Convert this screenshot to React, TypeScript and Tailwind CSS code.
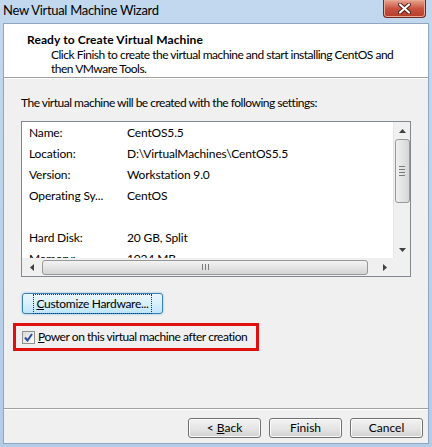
import React from 'react';

const rows: { label: string; value: string }[] = [
  { label: 'Name:', value: 'CentOS5.5' },
  { label: 'Location:', value: 'D:\\VirtualMachines\\CentOS5.5' },
  { label: 'Version:', value: 'Workstation 9.0' },
  { label: 'Operating Sy...', value: 'CentOS' },
  { label: '', value: '' },
  { label: 'Hard Disk:', value: '20 GB, Split' },
  { label: 'Memory:', value: '1024 MB' },
];

function WinButton({ children }: { children: React.ReactNode }) {
  return (
    <div className="w-[73px] h-[20px] rounded-[3px] border border-[#707070] bg-gradient-to-b from-[#f2f2f2] via-[#e6e6e6] to-[#d2d2d2] flex items-center justify-center text-[12px] text-black shadow-[inset_0_0_0_1px_#fcfcfc]">
      {children}
    </div>
  );
}

export default function App() {
  return (
    <div
      className="w-[432px] h-[447px] flex flex-col bg-gradient-to-b from-[#c2d8ef] to-[#b3cce8] overflow-hidden"
      style={{ fontFamily: 'Lato, "Liberation Sans", Arial, sans-serif' }}
    >
      {/* Title bar */}
      <div className="h-[23px] flex items-start justify-between pl-[3px] pr-[6px] shrink-0">
        <span className="text-[13px] leading-[20px] text-black tracking-[-0.3px]">New Virtual Machine Wizard</span>
        <div className="w-[43px] h-[18px] rounded-b-[4px] border border-t-0 border-[#6e2a20] bg-gradient-to-b from-[#e7a58f] via-[#c9533f] to-[#b53c28] flex items-center justify-center shadow-[inset_0_0_0_1px_#e8a898]">
          <svg width="13" height="11" viewBox="0 0 13 11">
            <path d="M2 1.5 L11 9.5 M11 1.5 L2 9.5" stroke="#4b1a12" strokeWidth="4" strokeLinecap="round" />
            <path d="M2 1.5 L11 9.5 M11 1.5 L2 9.5" stroke="#ffffff" strokeWidth="2.2" strokeLinecap="round" />
          </svg>
        </div>
      </div>

      {/* Client area */}
      <div className="mx-[3px] mb-[3px] flex-1 flex flex-col border border-[#8ea6c2] bg-[#f0f0f0] text-[12px]">
        {/* Header */}
        <div className="h-[54px] bg-white border-b border-[#a0a0a0] pt-[8px] shrink-0">
          <div className="pl-[23px] text-[12px] leading-[16px] font-bold text-black tracking-[0.1px]">Ready to Create Virtual Machine</div>
          <div className="pl-[47px] pr-[4px] text-[12px] leading-[14px] text-black tracking-[-0.5px]">
            Click Finish to create the virtual machine and start installing CentOS and
            <br />
            then VMware Tools.
          </div>
        </div>

        {/* Body */}
        <div className="flex-1 flex flex-col px-[17px] pt-[16px] border-t border-white">
          <div className="leading-[15px] text-black tracking-[-0.5px]">The virtual machine will be created with the following settings:</div>

          <div className="mt-[11px] h-[156px] border border-[#828790] bg-white flex flex-col">
            <div className="flex flex-1 min-h-0">
              <div className="flex-1 overflow-hidden">
                {rows.map((r, i) => (
                  <div key={i} className="h-[21px] flex items-center text-black tracking-[-0.15px]">
                    <span className="w-[105px] pl-[7px] shrink-0">{r.label}</span>
                    <span>{r.value}</span>
                  </div>
                ))}
              </div>
              {/* Vertical scrollbar */}
              <div className="w-[17px] bg-[#f0f0f0] border-l border-[#e6e6e6] flex flex-col items-center">
                <div className="h-[17px] flex items-center justify-center">
                  <svg width="7" height="4" viewBox="0 0 7 4"><path d="M0 4 L3.5 0 L7 4 Z" fill="#404040" /></svg>
                </div>
                <div className="w-[15px] h-[64px] rounded-[3px] border border-[#979797] bg-gradient-to-r from-[#f0f0f0] via-[#e3e3e3] to-[#d6d6d6] flex flex-col items-center justify-center gap-[2px]">
                  <div className="w-[6px] h-px bg-[#7a7a7a]" />
                  <div className="w-[6px] h-px bg-[#7a7a7a]" />
                  <div className="w-[6px] h-px bg-[#7a7a7a]" />
                  <div className="w-[6px] h-px bg-[#7a7a7a]" />
                </div>
                <div className="flex-1" />
                <div className="h-[17px] flex items-center justify-center">
                  <svg width="7" height="4" viewBox="0 0 7 4"><path d="M0 0 L3.5 4 L7 0 Z" fill="#404040" /></svg>
                </div>
              </div>
            </div>
            {/* Horizontal scrollbar */}
            <div className="h-[18px] flex shrink-0">
              <div className="flex-1 bg-[#f0f0f0] flex items-center">
                <div className="w-[20px] flex justify-center">
                  <svg width="4" height="7" viewBox="0 0 4 7"><path d="M4 0 L0 3.5 L4 7 Z" fill="#404040" /></svg>
                </div>
                <div className="w-[326px] h-[15px] rounded-[3px] border border-[#979797] bg-gradient-to-b from-[#f3f3f3] via-[#e4e4e4] to-[#d4d4d4] flex items-center justify-center gap-[2px]">
                  <div className="w-px h-[6px] bg-[#7a7a7a]" />
                  <div className="w-px h-[6px] bg-[#7a7a7a]" />
                  <div className="w-px h-[6px] bg-[#7a7a7a]" />
                </div>
                <div className="flex-1" />
                <div className="w-[17px] flex justify-center">
                  <svg width="4" height="7" viewBox="0 0 4 7"><path d="M0 0 L4 3.5 L0 7 Z" fill="#404040" /></svg>
                </div>
              </div>
              <div className="w-[17px] bg-[#f0f0f0]" />
            </div>
          </div>

          <div className="mt-[16px] ml-[1px] w-[141px] h-[21px] rounded-[3px] border border-[#3c7fb1] bg-gradient-to-b from-[#eaf6fd] via-[#d9f0fc] to-[#bee6fd] shadow-[0_0_2px_#5fb0e6] flex items-center justify-center">
            <span className="text-black px-[2px] outline-1 outline-dotted outline-[#333] tracking-[-0.3px]">
              <span className="underline">C</span>ustomize Hardware...
            </span>
          </div>

          <div className="mt-[9px] ml-[-8px] w-[246px] h-[28px] border-[3px] border-[#e01010] flex items-center pl-[6px]">
            <div className="w-[13px] h-[13px] border border-[#8e8f8f] bg-gradient-to-br from-[#dcdcdc] to-[#fbfbfb] flex items-center justify-center">
              <svg width="9" height="9" viewBox="0 0 9 9">
                <path d="M1 4.5 L3.5 7.5 L8 1" fill="none" stroke="#2a4f9a" strokeWidth="2" />
              </svg>
            </div>
            <span className="ml-[3px] text-black whitespace-nowrap tracking-[-0.45px]">
              <span className="underline">P</span>ower on this virtual machine after creation
            </span>
          </div>
        </div>

        {/* Footer */}
        <div className="h-[35px] border-t border-[#a0a0a0] shrink-0">
          <div className="h-full border-t border-white flex items-start justify-end gap-[8px] pt-[8px] pr-[5px]">
            <WinButton>&lt; <span className="underline ml-[3px]">B</span>ack</WinButton>
            <WinButton>Finish</WinButton>
            <WinButton>Cancel</WinButton>
          </div>
        </div>
      </div>
    </div>
  );
}
